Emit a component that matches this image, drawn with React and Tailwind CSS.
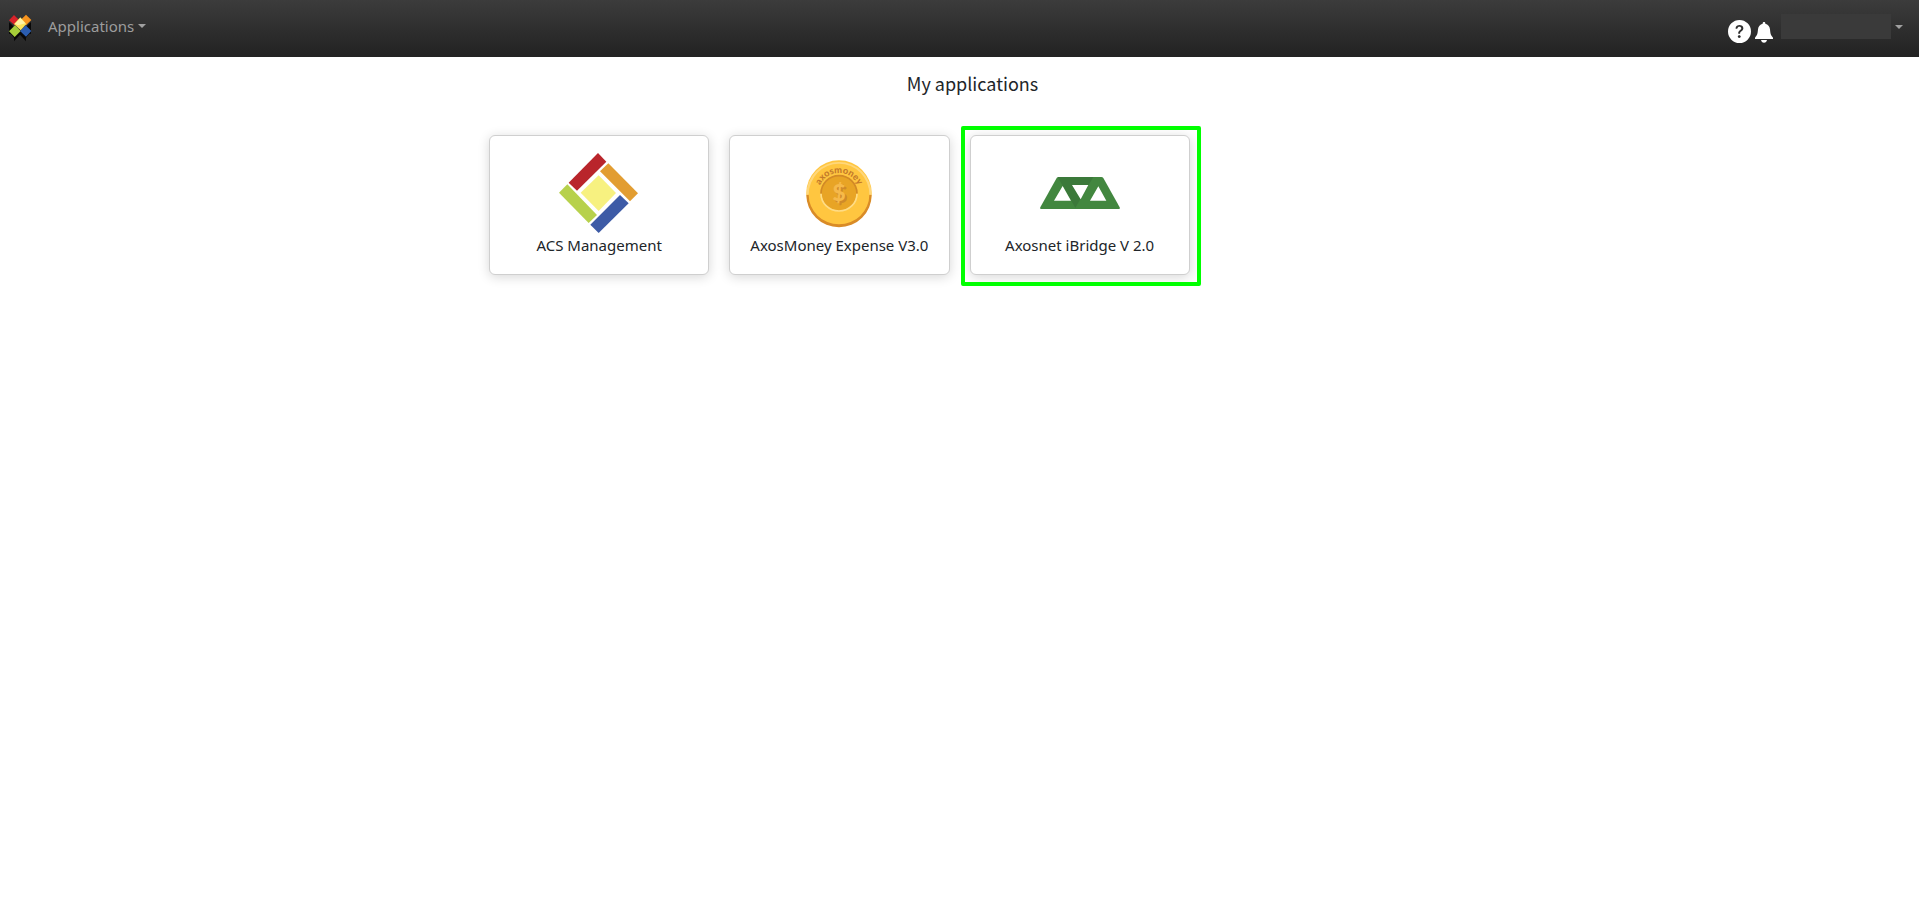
import React from 'react';
import { BsQuestionCircleFill } from 'react-icons/bs';

function BrandLogo() {
    return (
        <svg className="h-7 w-6" viewBox="0 0 72 84" aria-hidden="true">
            <path d="M3 24 L16 37 L20 54 L3 60 Z M69 24 L56 37 L52 54 L69 60 Z" fill="#080808" />
            <path d="M3 54 L18 71 L18 82 L36 62 L54 82 L54 71 L69 54 L36 44 Z" fill="#080808" />
            <path d="M18 3 L34 19 L20 34 L3 19 Z" fill="#d8232a" />
            <path d="M54 2 L70 18 L54 34 L38 18 Z" fill="#f7941e" />
            <path d="M21 34 L38 51 L20 69 L3 52 Z" fill="#a6ce39" />
            <path d="M53 34 L70 51 L54 68 L36 51 Z" fill="#2b5db0" />
            <path d="M37 10 L55 30 L38 49 L18 30 Z" fill="#fbe35a" />
            <path d="M37 12 L52 28 L30 34 L21 29 Z" fill="#fff3a5" />
        </svg>
    );
}

function BellIcon() {
    return (
        <svg className="h-[21px] w-[18px]" viewBox="0 0 54 63" fill="#fff" aria-hidden="true">
            <path d="M27 0 c3 0 4 2 4 5 c8 2 13 8 14 17 c1 14 3 19 9 25 v4 H0 v-4 c6 -6 8 -11 9 -25 c1 -9 6 -15 14 -17 c0 -3 1 -5 4 -5 Z" />
            <path d="M18 54 h18 c-1 5 -4 8 -9 8 s-8 -3 -9 -8 Z" />
        </svg>
    );
}

function Caret() {
    return <span className="border-x-4 border-t-4 border-x-transparent border-t-[#a0a0a0]" />;
}

function AcsLogo() {
    return (
        <svg className="h-20 w-20" viewBox="0 0 240 240" aria-hidden="true">
            <path d="M117 0 L142 26 L54 113 L29 89 Z" fill="#b9252b" />
            <path d="M148 31 L123 55 L213 145 L237 121 Z" fill="#e29d31" />
            <path d="M119 67 L171 120 L119 174 L65 119 Z" fill="#f7f180" />
            <path d="M25 94 L0 119 L89 210 L114 186 Z" fill="#b7d14c" />
            <path d="M183 126 L209 151 L119 240 L94 215 Z" fill="#3d5ba6" />
        </svg>
    );
}

function AxosMoneyLogo() {
    return (
        <svg className="h-20 w-20" viewBox="0 0 240 240" aria-hidden="true">
            <circle cx="120" cy="120" r="98" fill="#ffc640" />
            <path d="M22 125 A98 98 0 0 0 218 125 L211 125 A91 89 0 0 1 29 125 Z" fill="#d98b27" />
            <path d="M22 125 A98 98 0 0 1 218 125 L211 125 A91 93 0 0 0 29 125 Z" fill="#ffd77a" />
            <circle cx="120" cy="120" r="53" fill="#e8a425" />
            <path d="M66 122 A54 54 0 0 1 174 122" fill="none" stroke="#d28a26" strokeWidth="5" />
            <path d="M66 122 A54 52 0 0 0 174 122" fill="none" stroke="#ffdc85" strokeWidth="5" />
            <path id="coin-arc" d="M58 122 A62 62 0 0 1 182 122" fill="none" />
            <text fontFamily="Lato, sans-serif" fontWeight="900" fontSize="28" fill="#c47a2a" textAnchor="middle">
                <textPath href="#coin-arc" startOffset="50%">axosmoney</textPath>
            </text>
            <text
                x="120"
                y="144"
                fontFamily="Lato, sans-serif"
                fontWeight="900"
                fontSize="68"
                fill="#f6b94a"
                textAnchor="middle"
                className="[text-shadow:2px_2px_0_#cf8a2a]"
            >
                $
            </text>
        </svg>
    );
}

function BridgeLogo() {
    return (
        <svg className="h-20 w-20" viewBox="0 0 240 240" aria-hidden="true">
            <path d="M56 72 H184 Q188 72 190 75 L239 163 Q241 168 237 168 H3 Q-1 168 1 163 L50 75 Q52 72 56 72 Z" fill="#42873f" />
            <path d="M53 72 H160 L106 164 Z" fill="#3b793a" />
            <path d="M68 99 L93 143 H42 Z M96 96 H145 L122 139 Z M175 100 L199 143 H150 Z" fill="#fff" />
        </svg>
    );
}

const applications = [
    { name: 'ACS Management', Logo: AcsLogo },
    { name: 'AxosMoney Expense V3.0', Logo: AxosMoneyLogo },
    { name: 'Axosnet iBridge V 2.0', Logo: BridgeLogo, highlighted: true },
];

function ApplicationCard({ name, Logo, highlighted }) {
    return (
        <div className="relative p-[10px]">
            <a
                href="#"
                className="flex h-[140px] flex-col items-center rounded-md border border-[#cfcfcf] bg-white pt-[17px] text-[#212529] shadow-[0_2px_12px_rgba(0,0,0,0.16)]"
            >
                <Logo />
                <span className="text-[15px] leading-6">{name}</span>
            </a>
            {highlighted && (
                <span className="pointer-events-none absolute top-px -right-px -bottom-px left-px rounded-xs border-4 border-[#00ff00]" />
            )}
        </div>
    );
}

function App() {
    return (
        <div className="min-h-screen bg-white font-['Noto_Sans',sans-serif]">
            <header className="flex h-[57px] items-start justify-between bg-linear-to-b from-[#3c3c3c] to-[#222222] px-2">
                <nav className="flex items-start pt-[14px]">
                    <a href="#" aria-label="Home">
                        <BrandLogo />
                    </a>
                    <button type="button" className="ml-4 flex items-center gap-1 text-[15px] leading-6 text-[#9d9d9d]">
                        Applications
                        <Caret />
                    </button>
                </nav>

                <div className="flex items-start pt-[14px] pr-2">
                    <button type="button" aria-label="Help" className="mt-[6px]">
                        <BsQuestionCircleFill className="h-[23px] w-[23px] text-white" />
                    </button>
                    <button type="button" aria-label="Notifications" className="mt-2 ml-1">
                        <BellIcon />
                    </button>
                    <button type="button" aria-label="Account" className="ml-2 flex items-center gap-1">
                        <span className="h-[25px] w-[110px] bg-[#3a3a3a]" />
                        <Caret />
                    </button>
                </div>
            </header>

            <main>
                <h1 className="pt-[10px] pl-[26px] text-center font-['Noto_Sans_CJK_SC',sans-serif] text-lg leading-8 font-normal text-[#212529]">
                    My applications
                </h1>
                <div className="mx-auto mt-[26px] grid w-full max-w-[961px] grid-cols-4">
                    {applications.map((app) => (
                        <ApplicationCard key={app.name} {...app} />
                    ))}
                </div>
            </main>
        </div>
    );
}

export default App;
